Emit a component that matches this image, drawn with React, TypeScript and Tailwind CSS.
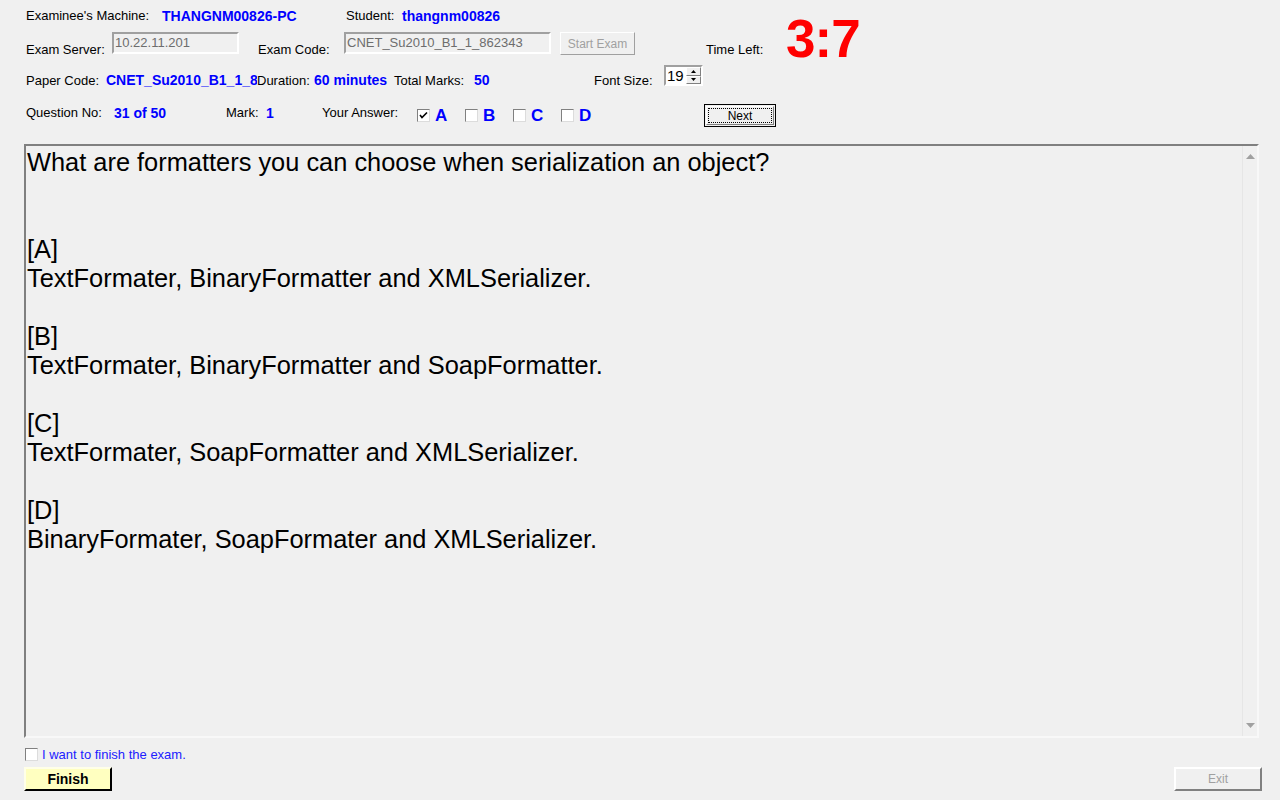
import React from 'react';

const font = { fontFamily: '"Liberation Sans", Arial, sans-serif' };

function Box({ checked }: { checked?: boolean }) {
  return (
    <span className="w-[13px] h-[13px] bg-white border border-t-[#808080] border-l-[#808080] border-r-[#dcdcdc] border-b-[#dcdcdc] flex items-center justify-center shrink-0">
      {checked && (
        <svg width="9" height="9" viewBox="0 0 9 9">
          <path d="M1 4 L3 6.5 L8 1.5" stroke="#000" strokeWidth="1.6" fill="none" />
        </svg>
      )}
    </span>
  );
}

function Choice({ letter, checked }: { letter: string; checked?: boolean }) {
  return (
    <div className="w-[48px] flex items-center gap-[5px]">
      <Box checked={checked} />
      <span className="text-[17px] font-bold text-[#0000ff]">{letter}</span>
    </div>
  );
}

const answers = [
  ['[A]', 'TextFormater, BinaryFormatter and XMLSerializer.'],
  ['[B]', 'TextFormater, BinaryFormatter and SoapFormatter.'],
  ['[C]', 'TextFormater, SoapFormatter and XMLSerializer.'],
  ['[D]', 'BinaryFormater, SoapFormater and XMLSerializer.'],
];

export default function App() {
  return (
    <div className="w-[1280px] h-[800px] bg-[#f0f0f0] overflow-hidden text-[13px] text-black" style={font}>
      {/* row 1 */}
      <div className="flex items-center h-[20px] mt-[6px] pl-[26px]">
        <span className="w-[136px]">Examinee's Machine:</span>
        <span className="w-[184px] font-bold text-[14px] text-[#0000ff]">THANGNM00826-PC</span>
        <span className="w-[56px]">Student:</span>
        <span className="font-bold text-[14px] text-[#0000ff]">thangnm00826</span>
      </div>

      {/* row 2 */}
      <div className="flex items-start h-[23px] mt-[6px] pl-[26px]">
        <span className="w-[86px] mt-[8px]">Exam Server:</span>
        <div className="w-[127px] h-[22px] border-2 border-t-[#a0a0a0] border-l-[#a0a0a0] border-r-white border-b-white px-[1px] text-[#6d6d6d] leading-[18px]">
          10.22.11.201
        </div>
        <span className="w-[86px] ml-[19px] mt-[8px]">Exam Code:</span>
        <div className="w-[207px] h-[22px] border-2 border-t-[#a0a0a0] border-l-[#a0a0a0] border-r-white border-b-white px-[1px] text-[#6d6d6d] leading-[18px]">
          CNET_Su2010_B1_1_862343
        </div>
        <div className="w-[75px] h-[23px] ml-[9px] border border-t-white border-l-white border-r-[#a0a0a0] border-b-[#a0a0a0] flex items-center justify-center text-[12px] text-[#a0a0a0]">
          Start Exam
        </div>
        <span className="w-[80px] ml-[71px] mt-[8px]">Time Left:</span>
        <span className="-mt-[20px] text-[53px] leading-none font-bold text-[#ff0000] tracking-[-1px]">3:7</span>
      </div>

      {/* row 3 */}
      <div className="flex items-start h-[22px] mt-[10px] pl-[26px]">
        <span className="w-[80px] mt-[6px]">Paper Code:</span>
        <span className="w-[151px] mt-[5px] overflow-hidden whitespace-nowrap font-bold text-[14px] text-[#0000ff]">CNET_Su2010_B1_1_862343</span>
        <span className="w-[57px] mt-[6px]">Duration:</span>
        <span className="w-[80px] mt-[5px] font-bold text-[14px] text-[#0000ff]">60 minutes</span>
        <span className="w-[80px] mt-[6px]">Total Marks:</span>
        <span className="w-[120px] mt-[5px] font-bold text-[14px] text-[#0000ff]">50</span>
        <span className="w-[70px] mt-[6px]">Font Size:</span>
        <div className="w-[39px] h-[21px] bg-white border-2 border-t-[#a0a0a0] border-l-[#a0a0a0] border-r-white border-b-white flex">
          <span className="flex-1 text-[15px] leading-[17px] pl-[1px]">19</span>
          <div className="w-[15px] flex flex-col">
            <div className="flex-1 bg-[#f0f0f0] border border-t-white border-l-white border-r-[#808080] border-b-[#808080] flex items-center justify-center">
              <svg width="5" height="3" viewBox="0 0 5 3"><path d="M2.5 0 L5 3 L0 3Z" fill="#000" /></svg>
            </div>
            <div className="flex-1 bg-[#f0f0f0] border border-t-white border-l-white border-r-[#808080] border-b-[#808080] flex items-center justify-center">
              <svg width="5" height="3" viewBox="0 0 5 3"><path d="M0 0 L5 0 L2.5 3Z" fill="#000" /></svg>
            </div>
          </div>
        </div>
      </div>

      {/* row 4 */}
      <div className="flex items-center h-[23px] mt-[17px] pl-[26px]">
        <span className="w-[88px] -mt-[5px]">Question No:</span>
        <span className="w-[112px] -mt-[5px] font-bold text-[14px] text-[#0000ff]">31 of 50</span>
        <span className="w-[40px] -mt-[5px]">Mark:</span>
        <span className="w-[56px] -mt-[5px] font-bold text-[14px] text-[#0000ff]">1</span>
        <span className="w-[95px] -mt-[5px]">Your Answer:</span>
        <Choice letter="A" checked />
        <Choice letter="B" />
        <Choice letter="C" />
        <Choice letter="D" />
        <div className="ml-[95px] w-[72px] h-[23px] border border-black bg-[#f0f0f0] p-[1px]">
          <div className="h-full border border-t-white border-l-white border-r-[#808080] border-b-[#808080] p-[1px]">
            <div className="h-full border border-dotted border-black flex items-center justify-center text-[12px]">Next</div>
          </div>
        </div>
      </div>

      {/* question area */}
      <div className="ml-[24px] mt-[17px] w-[1235px] h-[594px] border-2 border-t-[#808080] border-l-[#808080] border-r-[#f8f8f8] border-b-[#f8f8f8] flex">
        <div className="flex-1 text-[25.4px] leading-[29px] pl-[1px] pt-[2px]">
          <div>What are formatters you can choose when serialization an object?</div>
          <div className="h-[29px]" />
          <div className="h-[29px]" />
          {answers.map(([k, t], i) => (
            <div key={i}>
              <div>{k}</div>
              <div>{t}</div>
              <div className="h-[29px]" />
            </div>
          ))}
        </div>
        <div className="w-[15px] border-l border-l-[#e6e6e6] flex flex-col justify-between items-center py-[8px]">
          <svg width="9" height="5" viewBox="0 0 9 5"><path d="M4.5 0 L9 5 L0 5Z" fill="#a0a0a0" /></svg>
          <svg width="9" height="5" viewBox="0 0 9 5"><path d="M0 0 L9 0 L4.5 5Z" fill="#a0a0a0" /></svg>
        </div>
      </div>

      {/* finish */}
      <div className="flex items-center gap-[4px] ml-[25px] mt-[10px] h-[13px]">
        <Box />
        <span className="text-[13px] text-[#2020ff]">I want to finish the exam.</span>
      </div>
      <div className="flex justify-between mt-[6px] pl-[24px] pr-[18px]">
        <div className="w-[88px] h-[24px] bg-[#ffffc0] border-2 border-t-[#ffffe8] border-l-[#ffffe8] border-r-black border-b-black flex items-center justify-center font-bold text-[14px]">
          Finish
        </div>
        <div className="w-[88px] h-[24px] border-2 border-t-white border-l-white border-r-[#808080] border-b-[#808080] flex items-center justify-center text-[12px] text-[#a0a0a0]">
          Exit
        </div>
      </div>
    </div>
  );
}
